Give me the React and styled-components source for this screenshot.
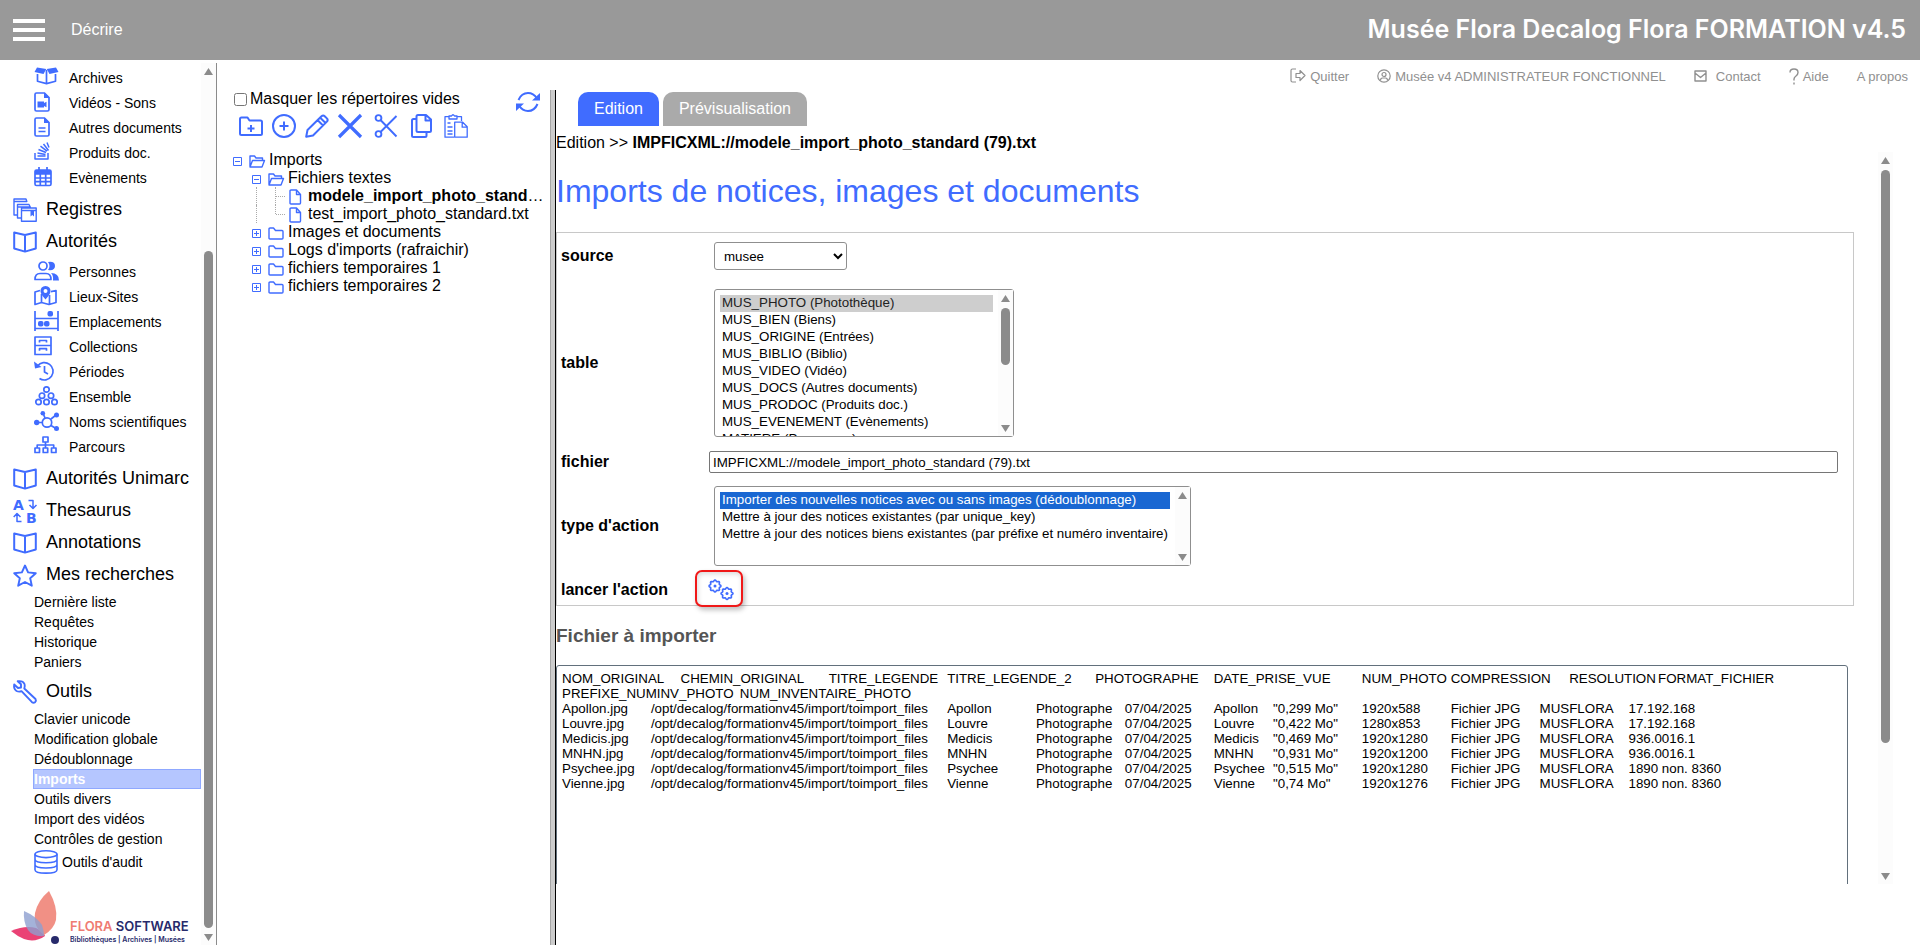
import React from "react";
import styled, { createGlobalStyle } from "styled-components";

const BLUE = "#406cff";

// every drawing has its own width/height, the stroke is shared
const Icon = ({ w, h, sw = 1.7, children }) => (
  <svg
    width={w}
    height={h}
    viewBox={`0 0 ${w} ${h}`}
    fill="none"
    stroke="currentColor"
    strokeWidth={sw}
    strokeLinejoin="round"
    aria-hidden="true"
  >
    {children}
  </svg>
);

const fill = { fill: "currentColor", stroke: "none" };

const BookIcon = () => (
  <Icon w={24} h={22} sw={2}>
    <path d="M12 4 1.2 1.5v16L12 20.6l10.8-3.1v-16zM12 4v16.5" />
  </Icon>
);

const icons = {
  archives: (
    <Icon w={25} h={18}>
      <path {...fill} d="M3 0.5 12.3 2 9.5 7 0.5 5zM22 0.5 12.7 2 15.5 7 24.5 5z" />
      <path d="M3.5 7v7.2l9 2.4 9-2.4V7M12.5 3v13" />
    </Icon>
  ),
  video: (
    <Icon w={16} h={20}>
      <path d="M2.5 1h8L15 5.5V17.5q0 1.5-1.5 1.5h-11Q1 19 1 17.5v-15Q1 1 2.5 1z" />
      <path {...fill} d="M10 0.5V6h5.5zM3.5 9.5h6.5v1.5l2.5-1.2v5.4L10 14v1.5H3.5z" />
    </Icon>
  ),
  document: (
    <Icon w={16} h={20}>
      <path d="M2.5 1h8L15 5.5V17.5q0 1.5-1.5 1.5h-11Q1 19 1 17.5v-15Q1 1 2.5 1zM4.5 11h7M4.5 14.5h7" />
      <path {...fill} d="M10 0.5V6h5.5z" />
    </Icon>
  ),
  stack: (
    <Icon w={16} h={18} sw={1.5}>
      <path d="M1 11v6h13v-6M3.5 14h8M3.5 11l8 1.5M4.5 7.5l7.5 3M6.5 4.2l6.5 5M9.5 2l5 6.5M13 0.5l2 5" />
    </Icon>
  ),
  calendar: (
    <Icon w={18} h={20}>
      <rect x="1" y="3" width="16" height="15.5" rx="1.5" />
      <path d="M1 7h16M1 11h16M1 14.7h16M6.3 7v11M11.7 7v11M5 0v4M13 0v4" />
      <path {...fill} d="M1 3h16v4H1z" />
    </Icon>
  ),
  registres: (
    <Icon w={24} h={24} sw={1.4}>
      <path d="M4 17H1V1h12l1 3M1 3.5h13M8.5 20H4.5V6.5H16l1.5 3M4.5 9h13M8.5 23.2V10H23.2v13.2zM8.5 12.5h14.5" />
      <path {...fill} d="M17.5 12.5h3.5v6l-1.7-1.5-1.8 1.5z" />
    </Icon>
  ),
  personnes: (
    <Icon w={25} h={20}>
      <circle cx="9" cy="5" r="4" />
      <path d="M1 18.5q0-6 5-6h6q5 0 5 6z" />
      <path {...fill} d="M14 1q7-1 7 4t-7 4q3-4 0-8zM17 12q8 0 8 7.5h-6Q19.5 14 17 12z" />
    </Icon>
  ),
  lieux: (
    <Icon w={23} h={20}>
      <path d="M6 4.5 1 6v12.5l6.5-2 7.5 2 7-2V4.5l-5 1.2M7.5 8v8.5M15.5 9v9" />
      <path
        {...fill}
        fillRule="evenodd"
        d="M11.5 0q5 0.3 5 5 0 3-5 8.5-5-5.5-5-8.5 0-4.7 5-5zm0 3a2 2 0 1 0 0 4 2 2 0 0 0 0-4z"
      />
    </Icon>
  ),
  emplacements: (
    <Icon w={25} h={20}>
      <path d="M1 0v20M24 0v20M1 7.5h23M1 17.5h23" />
      <rect {...fill} x="13.5" y="0" width="5.5" height="5.5" rx="2" />
      <rect {...fill} x="4" y="10" width="5.5" height="5.5" rx="2" />
      <rect {...fill} x="10" y="10" width="5.5" height="5.5" rx="2" />
    </Icon>
  ),
  collections: (
    <Icon w={18} h={20}>
      <path d="M1 1h16v17.5H1zM1 9.5h16M5.5 6.5v-2h7v2M5.5 14.7v-2h7v2" />
    </Icon>
  ),
  periodes: (
    <Icon w={20} h={20}>
      <path d="M3.5 5A8.7 8.7 0 1 1 5.5 17.5M10.5 5v6l3.5 2" />
      <path {...fill} d="M0 0.5 7.5 6 1 7.5z" />
    </Icon>
  ),
  ensemble: (
    <Icon w={24} h={20}>
      <circle cx="12.5" cy="3.5" r="2.7" />
      <circle cx="8" cy="9.7" r="2.7" />
      <circle cx="17" cy="9.7" r="2.7" />
      <circle cx="4.5" cy="16" r="2.7" />
      <circle cx="12.5" cy="16" r="2.7" />
      <circle cx="20.5" cy="16" r="2.7" />
    </Icon>
  ),
  noms: (
    <Icon w={25} h={20}>
      <circle cx="13" cy="11.5" r="4.7" />
      <path d="M3 11.5h5.5M9 2l2 5M17 8l5-4M17 14.5l5 3" />
      <circle {...fill} cx="2.7" cy="11.5" r="2.7" />
      <circle {...fill} cx="8.8" cy="2.3" r="2.3" />
      <circle {...fill} cx="22.5" cy="4" r="2.5" />
      <circle {...fill} cx="22.5" cy="17.5" r="2.5" />
    </Icon>
  ),
  parcours: (
    <Icon w={23} h={18}>
      <path d="M9 1h5v5H9zM1 12h4.5v4.5H1zM9.2 12h4.5v4.5H9.2zM17.5 12H22v4.5h-4.5zM11.5 6v6M3.2 12V9h16.5v3" />
    </Icon>
  ),
  livre: <BookIcon />,
  thesaurus: (
    <Icon w={24} h={24} sw={1.5}>
      <path d="M15.5 1.5H20V9M16.5 6l3.5 3.5L23.5 6M8.5 22.5H4V15M0.7 18 4 14.5 7.5 18" />
      <LetterIcon x="0" y="11">A</LetterIcon>
      <LetterIcon x="13" y="24">B</LetterIcon>
    </Icon>
  ),
  etoile: (
    <Icon w={24} h={23} sw={1.9}>
      <path d="m12 1.5 3.1 6.9 7.7 0.8-5.6 5 1.6 7.5L12 18l-6.8 3.7 1.6-7.5-5.6-5 7.7-0.8z" />
    </Icon>
  ),
  outils: (
    <Icon w={24} h={24} sw={1.9}>
      <path d="M1.2 4.5 5 8l3-0.5L8 4.2 4.7 1.2Q10 0.5 11.5 4q0.7 2-0.2 4.5L22.5 19q1 1.7-0.4 3.2-1.6 1.2-3.1 0L8.5 11.2Q6 12.2 3.5 11 0.5 9 1.2 4.5z" />
    </Icon>
  ),
  audit: (
    <Icon w={24} h={24} sw={1.6}>
      <ellipse cx="12" cy="4.2" rx="11" ry="3.4" />
      <path d="M1 4.2v15.5c0 4.6 22 4.6 22 0V4.2M1 9.3c0 4.6 22 4.6 22 0M1 14.5c0 4.6 22 4.6 22 0" />
    </Icon>
  ),
};

const toolbar = [
  {
    label: "Nouveau répertoire",
    icon: (
      <Icon w={24} h={24} sw={2}>
        <path d="M2.5 3.5h6l2 3h11q1.5 0 1.5 1.5v11.5q0 1.5-1.5 1.5h-19Q1 21 1 19.5V5q0-1.5 1.5-1.5zM12 11v7M8.5 14.5h7" />
      </Icon>
    ),
  },
  {
    label: "Ajouter",
    icon: (
      <Icon w={24} h={24} sw={2}>
        <circle cx="12" cy="12" r="11" />
        <path d="M12 7.5v9M7.5 12h9" />
      </Icon>
    ),
  },
  {
    label: "Modifier",
    icon: (
      <Icon w={24} h={24} sw={2}>
        <path d="M1.2 22.8 2.5 16 16.5 2.2q1.7-1.5 3.2 0l2.2 2.2q1.5 1.5 0 3.2L8 21.5zM12.5 6l5.5 5.5M15 3.5l5.5 5.5" />
      </Icon>
    ),
  },
  {
    label: "Supprimer",
    icon: (
      <Icon w={24} h={24} sw={3.2}>
        <path d="M1 1l22 22M23 1 1 23" />
      </Icon>
    ),
  },
  {
    label: "Couper",
    icon: (
      <Icon w={24} h={24} sw={1.9}>
        <circle cx="4.5" cy="4" r="2.9" />
        <circle cx="4.5" cy="20" r="2.9" />
        <path d="M6.5 6 22.5 22.5M6.5 18 22.5 2" />
      </Icon>
    ),
  },
  {
    label: "Copier",
    icon: (
      <Icon w={22} h={24} sw={2}>
        <path d="M8 1h8l5 4.5v11q0 1.5-1.5 1.5H8q-1.5 0-1.5-1.5v-14Q6.5 1 8 1zM15.500 1v5.5H21M6.500 5H3.5Q2 5 2 6.5v15Q2 23 3.500 23H15q1.5 0 1.500-1.5V18" />
      </Icon>
    ),
  },
  {
    label: "Coller",
    icon: (
      <Icon w={24} h={24} sw={1.3}>
        <path d="M10 23.2H1V2.7h4M13 2.7h4.5V7M5 5V2h2.5q1.5-2.5 3 0H13v3zM3.5 9h3M3.5 13h5M3.5 17h5M3.5 20h5" />
        <path d="M10.7 8.2h8l4.5 4.5v10.5H10.7zM18.2 8.2v5h5" />
      </Icon>
    ),
  },
];

const menu = [
  {
    items: [
      ["Archives", icons.archives],
      ["Vidéos - Sons", icons.video],
      ["Autres documents", icons.document],
      ["Produits doc.", icons.stack],
      ["Evènements", icons.calendar],
    ],
  },
  { title: "Registres", icon: icons.registres },
  {
    title: "Autorités",
    icon: icons.livre,
    items: [
      ["Personnes", icons.personnes],
      ["Lieux-Sites", icons.lieux],
      ["Emplacements", icons.emplacements],
      ["Collections", icons.collections],
      ["Périodes", icons.periodes],
      ["Ensemble", icons.ensemble],
      ["Noms scientifiques", icons.noms],
      ["Parcours", icons.parcours],
    ],
  },
  { title: "Autorités Unimarc", icon: icons.livre },
  { title: "Thesaurus", icon: icons.thesaurus },
  { title: "Annotations", icon: icons.livre },
  {
    title: "Mes recherches",
    icon: icons.etoile,
    links: ["Dernière liste", "Requêtes", "Historique", "Paniers"],
  },
  {
    title: "Outils",
    icon: icons.outils,
    links: [
      "Clavier unicode",
      "Modification globale",
      "Dédoublonnage",
      "Imports",
      "Outils divers",
      "Import des vidéos",
      "Contrôles de gestion",
    ],
  },
];

const tree = [
  { level: 0, open: true, name: "Imports" },
  { level: 1, open: true, name: "Fichiers textes" },
  { level: 2, name: "modele_import_photo_standard (79).txt", current: true },
  { level: 2, name: "test_import_photo_standard.txt", last: true },
  { level: 1, name: "Images et documents" },
  { level: 1, name: "Logs d'imports (rafraichir)" },
  { level: 1, name: "fichiers temporaires 1" },
  { level: 1, name: "fichiers temporaires 2" },
];

const tables = [
  "MUS_PHOTO (Photothèque)",
  "MUS_BIEN (Biens)",
  "MUS_ORIGINE (Entrées)",
  "MUS_BIBLIO (Biblio)",
  "MUS_VIDEO (Vidéo)",
  "MUS_DOCS (Autres documents)",
  "MUS_PRODOC (Produits doc.)",
  "MUS_EVENEMENT (Evènements)",
  "MATIERE (Personnes)",
];

const actions = [
  "Importer des nouvelles notices avec ou sans images (dédoublonnage)",
  "Mettre à jour des notices existantes (par unique_key)",
  "Mettre à jour des notices biens existantes (par préfixe et numéro inventaire)",
];

const columns = [
  "NOM_ORIGINAL",
  "CHEMIN_ORIGINAL",
  "TITRE_LEGENDE",
  "TITRE_LEGENDE_2",
  "PHOTOGRAPHE",
  "DATE_PRISE_VUE",
  "NUM_PHOTO",
  "COMPRESSION",
  "RESOLUTION",
  "FORMAT_FICHIER",
  "PREFIXE_NUMINV_PHOTO",
  "NUM_INVENTAIRE_PHOTO",
];

const photos = [
  ["Apollon", "0,299", "1920x588", "17.192.168"],
  ["Louvre", "0,422", "1280x853", "17.192.168"],
  ["Medicis", "0,469", "1920x1280", "936.0016.1"],
  ["MNHN", "0,931", "1920x1200", "936.0016.1"],
  ["Psychee", "0,515", "1920x1280", "1890 non. 8360"],
  ["Vienne", "0,74", "1920x1276", "1890 non. 8360"],
];

const fileText = [
  columns.join("\t"),
  ...photos.map(([name, size, resolution, num]) =>
    [
      `${name}.jpg`,
      "/opt/decalog/formationv45/import/toimport_files",
      name,
      "",
      "Photographe",
      "07/04/2025",
      name,
      `"${size} Mo"`,
      resolution,
      "Fichier JPG",
      "MUSFLORA",
      num,
    ].join("\t")
  ),
].join("\n");

function LetterIcon({ x, y, children }) {
  return (
    <text
      x={x}
      y={y}
      fill="currentColor"
      stroke="none"
      fontFamily="DejaVu Sans"
      fontWeight="700"
      fontSize="14"
    >
      {children}
    </text>
  );
}

const FolderIcon = ({ open }) => (
  <Icon w={16} h={13} sw={1.4}>
    {open ? (
      <path d="M1 11.5V1h4.5l1.5 2h6.5v2.5M1 12 3.5 5.5h12L13 12z" />
    ) : (
      <path d="M1 2q0-1 1-1h3.5l2 2.5H14q1 0 1 1V11q0 1-1 1H2q-1 0-1-1z" />
    )}
  </Icon>
);

const FileIcon = () => (
  <Icon w={14} h={16} sw={1.4}>
    <path d="M3 1h5.5l4 4.5V14q0 1-1 1H3q-1 0-1-1V2q0-1 1-1zM8.5 1v4.5h4" />
  </Icon>
);

const gearPath = (cx, cy) => {
  let d = "";
  for (let i = 0; i < 64; i++) {
    const a = (i / 64) * Math.PI * 2;
    const r = 5.3 + 0.7 * Math.cos(8 * a);
    d += `${i ? "L" : "M"}${cx + r * Math.cos(a)} ${cy + r * Math.sin(a)}`;
  }
  return d + "z";
};

const Scrollbar = ({ before = 0, thumb = 0, after = 0 }) => (
  <Bar aria-hidden="true">
    <Arrow />
    <Track>
      <Space $grow={before} />
      {thumb > 0 && <Thumb $grow={thumb} />}
      <Space $grow={after} />
    </Track>
    <Arrow $down />
  </Bar>
);

const Sidebar = () => (
  <SidebarBox>
    <Nav>
      {menu.map((group, index) => (
        <React.Fragment key={index}>
          {group.title && (
            <MainLink href="#">
              {group.icon}
              <span>{group.title}</span>
            </MainLink>
          )}
          {group.items && (
            <SubList>
              {group.items.map(([name, icon]) => (
                <li key={name}>
                  <SubLink href="#">
                    <SubIcon>{icon}</SubIcon>
                    {name}
                  </SubLink>
                </li>
              ))}
            </SubList>
          )}
          {group.links && (
            <SubList>
              {group.links.map((name) => (
                <li key={name}>
                  <PlainLink href="#" $active={name === "Imports"}>
                    {name}
                  </PlainLink>
                </li>
              ))}
            </SubList>
          )}
        </React.Fragment>
      ))}
      <AuditLink href="#">
        {icons.audit}
        <span>Outils d'audit</span>
      </AuditLink>
      <Logo>
        <svg width="50" height="54" viewBox="0 0 50 54" aria-hidden="true">
          <path fill="#ea4275" d="M0 40Q14 34 25 37 33 41 34 45 24 52 13 48 6 45 0 40z" />
          <path fill="#f19085" d="M38 0Q47 16 45 29 43 38 33 44 22 36 24 22 27 9 38 0z" />
          <path fill="#8d9fd0" fillOpacity="0.8" d="M13 20Q25 25 31 34 33 40 33 45 22 46 17 39 12 31 13 20z" />
          <circle fill="#272a6b" cx="44" cy="49" r="4" />
        </svg>
        <LogoText>
          <Brand>
            <span>FLORA</span> SOFTWARE
          </Brand>
          <Slogan>Bibliothèques | Archives | Musées</Slogan>
        </LogoText>
      </Logo>
    </Nav>
    <Scrollbar before={170} thumb={677} />
  </SidebarBox>
);

const TreePanel = () => (
  <TreeBox>
    <TreeHead>
      <HideEmpty>
        <input type="checkbox" />
        Masquer les répertoires vides
      </HideEmpty>
      <IconButton aria-label="Rafraichir">
        <Icon w={24} h={20} sw={2}>
          <path d="M2.5 8Q5.5 1 12 1q5.5 0 9 5.5M21.5 12Q18.5 19 12 19q-5.5 0-9-5.5" />
          <path {...fill} d="M24 1v7.5h-8zM0 19v-7.5h8z" />
        </Icon>
      </IconButton>
    </TreeHead>
    <Toolbar>
      {toolbar.map((tool) => (
        <IconButton key={tool.label} aria-label={tool.label}>
          {tool.icon}
        </IconButton>
      ))}
    </Toolbar>
    <TreeList>
      {tree.map((node) => (
        <TreeRow key={node.name} $level={node.level}>
          {node.level === 2 ? (
            <>
              <Guide />
              <Branch $last={node.last} />
              <NodeIcon $file>
                <FileIcon />
              </NodeIcon>
            </>
          ) : (
            <>
              <Toggle aria-label={node.open ? "Fermer" : "Ouvrir"}>
                <Icon w={9} h={9} sw={1}>
                  <path d="M0.5 0.5h8v8h-8zM2 4.5h5" />
                  {!node.open && <path d="M4.5 2v5" />}
                </Icon>
              </Toggle>
              <NodeIcon>
                <FolderIcon open={node.open} />
              </NodeIcon>
            </>
          )}
          <NodeName>{node.current ? <b>{node.name}</b> : node.name}</NodeName>
        </TreeRow>
      ))}
    </TreeList>
  </TreeBox>
);

const ImportForm = () => (
  <Form onSubmit={(e) => e.preventDefault()}>
    <Label htmlFor="source">source</Label>
    <Select id="source" defaultValue="musee">
      <option>musee</option>
    </Select>

    <Label htmlFor="table">table</Label>
    <ListFrame>
      <List id="table" size={8} defaultValue={tables[0]} $height={146}>
        {tables.map((name) => (
          <option key={name}>{name}</option>
        ))}
      </List>
      <Scrollbar thumb={58} after={55} />
    </ListFrame>

    <Label htmlFor="fichier">fichier</Label>
    <TextInput
      id="fichier"
      type="text"
      defaultValue="IMPFICXML://modele_import_photo_standard (79).txt"
    />

    <Label htmlFor="action">type d'action</Label>
    <ListFrame $wide>
      <List id="action" size={4} defaultValue={actions[0]} $height={78} $focus>
        {actions.map((name) => (
          <option key={name}>{name}</option>
        ))}
      </List>
      <Scrollbar />
    </ListFrame>

    <Label as="span">lancer l'action</Label>
    <Launch>
      <LaunchButton aria-label="lancer l'action">
        <Icon w={26} h={22} sw={1.6}>
          <path d={gearPath(7, 7)} />
          <path d={gearPath(19, 14.5)} />
          <circle {...fill} cx="7" cy="7" r="1.5" />
          <circle {...fill} cx="19" cy="14.5" r="1.5" />
        </Icon>
      </LaunchButton>
    </Launch>
  </Form>
);

const App = () => (
  <Page>
    <GlobalStyle />
    <Header>
      <Burger aria-label="Menu">
        <span />
        <span />
        <span />
      </Burger>
      <Mode>Décrire</Mode>
      <SiteName>Musée Flora Decalog Flora FORMATION v4.5</SiteName>
    </Header>
    <Body>
      <Sidebar />
      <Main>
        <TopLinks>
          <TopLink href="#">
            <Icon w={16} h={16} sw={1.2}>
              <path d="M6 1H2.5Q1 1 1 2.5v10Q1 14 2.5 14H6M6 5.5h4V2.5l5 5-5 5v-3H6z" />
            </Icon>
            Quitter
          </TopLink>
          <TopLink href="#">
            <Icon w={14} h={14} sw={1.2}>
              <circle cx="7" cy="7" r="6.2" />
              <circle cx="7" cy="5.5" r="2" />
              <path d="M3.5 11.5q0-2.5 2-2.5h3q2 0 2 2.5" />
            </Icon>
            Musée v4 ADMINISTRATEUR FONCTIONNEL
          </TopLink>
          <TopLink href="#" $gap={9}>
            <Icon w={13} h={12} sw={1.4}>
              <path d="M1 1h11v10H1zM1 3l5.5 4.5L12 3" />
            </Icon>
            Contact
          </TopLink>
          <TopLink href="#">
            <Icon w={10} h={17} sw={1.4}>
              <path d="M1 4.5Q1 1 5 1t4 3.5Q9 6.5 7 8T5 11v1.5M5 14.5v2" />
            </Icon>
            Aide
          </TopLink>
          <TopLink href="#">A propos</TopLink>
        </TopLinks>
        <Workspace>
          <TreePanel />
          <Splitter />
          <Content>
            <Tabs role="tablist">
              <Tab role="tab" aria-selected="true" $active>
                Edition
              </Tab>
              <Tab role="tab" aria-selected="false">
                Prévisualisation
              </Tab>
            </Tabs>
            <Breadcrumb>
              Edition &gt;&gt; <b>IMPFICXML://modele_import_photo_standard (79).txt</b>
            </Breadcrumb>
            <Pane>
              <PaneContent>
                <Title>Imports de notices, images et documents</Title>
                <ImportForm />
                <FileTitle id="file-title">Fichier à importer</FileTitle>
                <FileText
                  aria-labelledby="file-title"
                  spellCheck="false"
                  defaultValue={fileText}
                />
              </PaneContent>
              <Scrollbar thumb={573} after={124} />
            </Pane>
          </Content>
        </Workspace>
      </Main>
    </Body>
  </Page>
);
export default App;

const GlobalStyle = createGlobalStyle`
  * {
    box-sizing: border-box;
  }
  body {
    margin: 0;
    background-color: #fff;
    color: #000;
    font-family: "Liberation Sans", Arial, sans-serif;
    font-size: 16px;
  }
  a {
    color: inherit;
    text-decoration: none;
  }
  svg {
    display: block;
    flex: none;
    overflow: visible;
  }
  button, input, select, textarea {
    font-family: inherit;
  }
`;
const Page = styled.div`
  display: flex;
  flex-direction: column;
  height: 100vh;
  overflow: hidden;
`;
const Header = styled.header`
  display: flex;
  align-items: center;
  flex: none;
  height: 60px;
  padding: 0 14px 0 13px;
  background-color: #999;
  color: #fff;
`;
const Burger = styled.button`
  display: flex;
  flex-direction: column;
  gap: 5px;
  width: 32px;
  padding: 0;
  border: none;
  background: none;
  span {
    height: 4px;
    background-color: #fff;
  }
`;
const Mode = styled.span`
  margin-left: 26px;
`;
const SiteName = styled.h1`
  margin: 0 0 0 auto;
  padding-bottom: 2px;
  font-family: Inter, sans-serif;
  font-size: 25px;
  font-weight: 600;
  line-height: 28px;
`;
const Body = styled.div`
  display: flex;
  flex: 1;
  min-height: 0;
`;
const SidebarBox = styled.aside`
  display: flex;
  flex: none;
  width: 217px;
  margin-top: 3px;
  border-right: 1px solid #8b8b8b;
`;
const Nav = styled.nav`
  flex: 1;
  min-width: 0;
  overflow: hidden;
`;
const MainLink = styled.a`
  display: flex;
  align-items: center;
  gap: 9px;
  height: 32px;
  padding-left: 13px;
  font-size: 18px;
  white-space: nowrap;
  svg {
    color: ${BLUE};
    margin-top: 2px;
  }
`;
const SubList = styled.ul`
  margin: 2px 0 3px;
  padding: 0;
  list-style-type: none;
`;
const SubLink = styled.a`
  display: flex;
  align-items: center;
  height: 25px;
  padding-left: 34px;
  font-size: 14px;
  white-space: nowrap;
`;
const SubIcon = styled.span`
  width: 35px;
  height: 21px;
  color: ${BLUE};
`;
const PlainLink = styled.a`
  display: block;
  margin-left: 33px;
  height: 20px;
  border: 1px solid ${(props) => (props.$active ? "#8fa8ff" : "transparent")};
  background-color: ${(props) => (props.$active ? "#b5c6ff" : "transparent")};
  color: ${(props) => (props.$active ? "#fff" : "#000")};
  font-size: 14px;
  font-weight: ${(props) => (props.$active ? 700 : 400)};
  line-height: 18px;
`;
const AuditLink = styled.a`
  display: flex;
  align-items: center;
  gap: 4px;
  margin-top: -2px;
  padding-left: 34px;
  font-size: 14px;
  line-height: 22px;
  svg {
    color: ${BLUE};
  }
`;
const Logo = styled.div`
  display: flex;
  align-items: flex-end;
  gap: 9px;
  padding: 17px 0 0 11px;
`;
const LogoText = styled.div`
  font-family: Inter, sans-serif;
  color: #272a6b;
  white-space: nowrap;
`;
const Brand = styled.div`
  font-size: 13px;
  font-weight: 600;
  line-height: 18px;
  span {
    color: #ef7b72;
  }
`;
const Slogan = styled.div`
  font-size: 7px;
  font-weight: 600;
  line-height: 10px;
`;

const Bar = styled.div`
  display: flex;
  flex-direction: column;
  justify-content: space-between;
  flex: none;
  width: 15px;
  padding: 5px 0 4px;
  background-color: #fcfcfc;
`;
const Arrow = styled.div`
  flex: none;
  width: 9px;
  height: 7px;
  margin-left: 3px;
  background-color: #8b8b8b;
  clip-path: ${(props) =>
    props.$down ? "polygon(0 0, 100% 0, 50% 100%)" : "polygon(50% 0, 100% 100%, 0 100%)"};
`;
const Track = styled.div`
  display: flex;
  flex-direction: column;
  flex: 1;
  padding: 6px 0;
`;
const Space = styled.div`
  flex: ${(props) => props.$grow} 0 0;
`;
const Thumb = styled.div`
  flex: ${(props) => props.$grow} 0 0;
  width: 9px;
  margin-left: 3px;
  border-radius: 5px;
  background-color: #8b8b8b;
`;

const Main = styled.main`
  display: flex;
  flex-direction: column;
  flex: 1;
  min-width: 0;
`;
const TopLinks = styled.nav`
  display: flex;
  justify-content: flex-end;
  gap: 28px;
  height: 30px;
  padding: 2px 12px 0 0;
  color: #909090;
  font-size: 13px;
`;
const TopLink = styled.a`
  display: flex;
  align-items: center;
  gap: ${(props) => props.$gap || 4}px;
`;
const Workspace = styled.div`
  display: flex;
  flex: 1;
  min-height: 0;
`;
const TreeBox = styled.section`
  flex: none;
  width: 333px;
  padding: 2px 4px 0 16px;
`;
const TreeHead = styled.div`
  display: flex;
  align-items: flex-start;
  justify-content: space-between;
  height: 22px;
  padding-right: 6px;
`;
const HideEmpty = styled.label`
  line-height: 14px;
  input {
    width: 13px;
    height: 13px;
    margin: 0 3px 0 1px;
    vertical-align: -2px;
  }
`;
const IconButton = styled.button`
  padding: 0;
  border: none;
  background: none;
  color: ${BLUE};
`;
const Toolbar = styled.div`
  display: flex;
  gap: 9px;
  padding-left: 6px;
  button:nth-child(n + 5) {
    margin-left: 3px;
  }
`;
const TreeList = styled.ul`
  margin: 13px 0 0;
  padding: 0;
  list-style-type: none;
`;
const TreeRow = styled.li`
  display: flex;
  height: 18px;
  padding-left: ${(props) => (props.$level ? 19 : 0)}px;
  line-height: 18px;
`;
const Toggle = styled.button`
  display: flex;
  align-items: flex-start;
  flex: none;
  width: 16px;
  padding: 6px 0 0;
  border: none;
  background: none;
  color: ${BLUE};
`;
const Guide = styled.span`
  flex: none;
  width: 15px;
  margin-left: 4px;
  border-left: 1px dotted #aaa;
`;
const Branch = styled.span`
  flex: none;
  width: 10px;
  height: ${(props) => (props.$last ? 9 : 18)}px;
  margin: 0 3px 0 4px;
  border-left: 1px dotted #aaa;
  &::after {
    content: "";
    display: block;
    height: 9px;
    border-bottom: 1px dotted #aaa;
  }
`;
const NodeIcon = styled.span`
  flex: none;
  width: 16px;
  margin-right: 4px;
  padding-top: ${(props) => (props.$file ? 2 : 4)}px;
  color: ${BLUE};
`;
const NodeName = styled.span`
  overflow: hidden;
  text-overflow: ellipsis;
  white-space: nowrap;
`;
const Splitter = styled.div`
  flex: none;
  width: 6px;
  border-left: 1px solid #a5a5a5;
  border-right: 1px solid #000;
  background-color: #ccc;
`;

const Content = styled.section`
  display: flex;
  flex-direction: column;
  flex: 1;
  min-width: 0;
  padding: 2px 27px 61px 0;
`;
const Tabs = styled.div`
  display: flex;
  gap: 4px;
  padding-left: 22px;
`;
const Tab = styled.button`
  height: 34px;
  padding: 0 16px;
  border: none;
  border-radius: 10px 10px 0 0;
  background-color: ${(props) => (props.$active ? BLUE : "#aaa")};
  color: #fff;
  font-size: 16px;
`;
const Breadcrumb = styled.div`
  margin-top: 8px;
  line-height: 18px;
`;
const Pane = styled.div`
  display: flex;
  flex: 1;
  min-height: 0;
`;
const PaneContent = styled.div`
  flex: 1;
  min-width: 0;
  overflow: hidden;
`;
const Title = styled.h2`
  margin: 20px 0 22px;
  color: ${BLUE};
  font-size: 32px;
  font-weight: 400;
  line-height: 38px;
`;
const Form = styled.form`
  display: grid;
  grid-template-columns: 148px 1fr;
  align-items: center;
  margin-right: 24px;
  padding-left: 4px;
  border: 1px solid #c8c8c8;
`;
const Label = styled.label`
  font-weight: 700;
`;
const Select = styled.select`
  width: 133px;
  height: 28px;
  margin: 9px 5px;
  padding-left: 5px;
  border: 1px solid #8f8f8f;
  border-radius: 3px;
  background-color: #fff;
`;
const ListFrame = styled.div`
  display: flex;
  justify-self: start;
  width: ${(props) => (props.$wide ? "auto" : "300px")};
  margin: ${(props) => (props.$wide ? 9 : 10)}px 5px;
  border: 1px solid #8f8f8f;
  border-radius: 3px;
`;
const List = styled.select`
  flex: 1;
  height: ${(props) => props.$height}px;
  padding: 5px;
  border: none;
  outline: none;
  background: none;
  overflow: hidden;
  scrollbar-width: none;
  option {
    height: 17px;
    padding: 0 2px;
  }
  option:checked {
    background: ${(props) => (props.$focus ? "linear-gradient(#1967d2, #1967d2)" : "#cecece")};
    -webkit-text-fill-color: ${(props) => (props.$focus ? "#fff" : "#222")};
  }
`;
const TextInput = styled.input`
  height: 22px;
  margin: 4px 15px 4px 0;
  padding: 1px 3px;
  border: 1px solid #767676;
  border-radius: 2px;
`;
const Launch = styled.div`
  position: relative;
  height: 30px;
`;
// the red frame overlaps the bottom border of the form
const LaunchButton = styled.button`
  position: absolute;
  top: -5px;
  left: -14px;
  display: flex;
  align-items: center;
  justify-content: center;
  width: 48px;
  height: 37px;
  padding: 2px 0 0 4px;
  border: 2px solid #f01818;
  border-radius: 7px;
  background-color: #fff;
  box-shadow: 2px 3px 5px rgba(0, 0, 0, 0.25), inset 1px 2px 5px rgba(0, 0, 0, 0.15);
  color: ${BLUE};
`;
const FileTitle = styled.h3`
  margin: 19px 0 18px;
  color: #555;
  font-size: 19px;
  line-height: 22px;
`;
const FileText = styled.textarea`
  display: block;
  width: calc(100% - 30px);
  height: 320px;
  padding: 5px;
  border: 1px solid #62707c;
  border-radius: 3px;
  resize: none;
  overflow: hidden;
`;
